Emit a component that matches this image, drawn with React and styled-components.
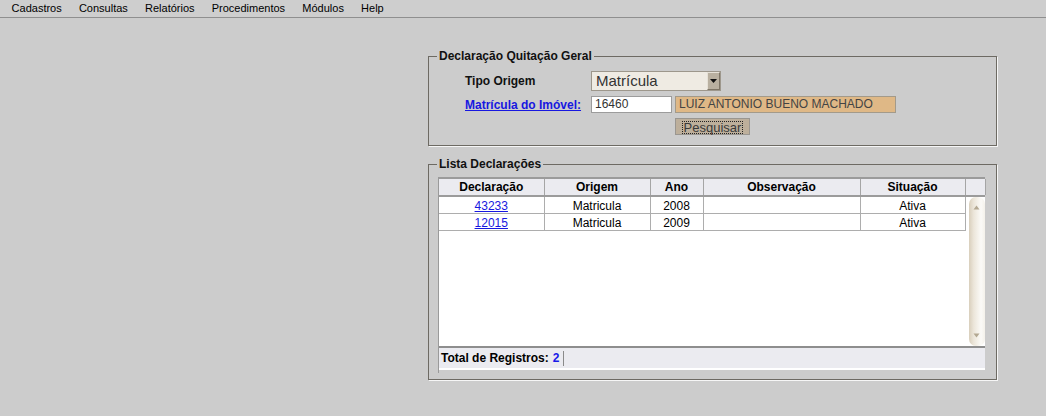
import React from "react";
import styled, { createGlobalStyle } from "styled-components";

const GlobalStyle = createGlobalStyle`
  html, body {
    margin: 0;
    padding: 0;
    background: #cccccc;
  }
  body {
    font-family: "Liberation Sans", Arial, sans-serif;
    color: #000;
  }
  #root {
    min-height: 416px;
  }
`;

const MenuBar = styled.div`
  display: flex;
  height: 17px;
  padding-left: 3px;
  border-bottom: 1px solid #8f8f8f;
  background: #cecece;
`;

const MenuItem = styled.div`
  padding: 0 8.6px;
  font-size: 11px;
  line-height: 17px;
`;

const Content = styled.div`
  display: flex;
  flex-direction: column;
  gap: 11px;
  width: 569px;
  margin: 31px 0 0 428px;
`;

const Group = styled.fieldset`
  margin: 0;
  padding: 0;
  min-width: 0;
  border: 1px solid #6d6a63;
  box-shadow: 1px 1px 0 #f6f6f6;
`;

const Legend = styled.legend`
  margin-left: 8px;
  padding: 0 2px;
  font-size: 12px;
  font-weight: bold;
  line-height: 14px;
  color: #111;
`;

const Form = styled.div`
  display: grid;
  grid-template-columns: 126px auto;
  row-gap: 5px;
  align-items: center;
  padding: 8px 0 10px 36px;
`;

const Label = styled.span`
  font-size: 12px;
  font-weight: bold;
  color: #111;
`;

const LinkLabel = styled.a`
  font-size: 12px;
  font-weight: bold;
  color: #1717e0;
  text-decoration: underline;
  cursor: pointer;
`;

const SelectBox = styled.div`
  display: flex;
  align-items: stretch;
  box-sizing: border-box;
  width: 130px;
  height: 20px;
  border: 1px solid #9d978c;
  background: #efebe3;
`;

const SelectText = styled.span`
  flex: 1;
  padding-left: 4px;
  font-size: 15px;
  line-height: 18px;
  color: #333;
`;

const SelectButton = styled.span`
  display: flex;
  align-items: center;
  justify-content: center;
  box-sizing: border-box;
  width: 13px;
  background: #b9b0a0;
  border-top: 1px solid #e6e1d7;
  border-left: 1px solid #e6e1d7;
  border-right: 1px solid #7e7566;
  border-bottom: 1px solid #7e7566;
`;

const InputRow = styled.div`
  display: flex;
  gap: 3px;
`;

const TextField = styled.div`
  box-sizing: border-box;
  width: ${p => p.$width}px;
  height: 17px;
  padding-left: 3px;
  border: 1px solid ${p => (p.$readonly ? "#a39a8a" : "#9c9c9c")};
  background: ${p => (p.$readonly ? "#dfb886" : "#ffffff")};
  font-size: 12px;
  line-height: 15px;
  color: ${p => (p.$readonly ? "#444" : "#333")};
  white-space: nowrap;
  overflow: hidden;
`;

const Button = styled.button`
  grid-column: 2;
  margin-left: 84px;
  box-sizing: border-box;
  width: 75px;
  height: 17px;
  padding: 1px 0 0;
  border: 1px solid #9a9690;
  background: #bdaf9b;
  font-family: "Liberation Sans", Arial, sans-serif;
  font-size: 13px;
  color: #3a3a3a;
  display: flex;
  justify-content: center;
  align-items: center;
`;

const ButtonFocus = styled.span`
  border: 1px dotted #222;
  padding: 0 1px;
  line-height: 11px;
`;

const ListArea = styled.div`
  padding: 6px 10px 6px 9px;
`;

const ListBox = styled.div`
  width: 546px;
  border-left: 1px solid #9a9a9a;
  padding-bottom: 3px;
`;

const Grid = styled.table`
  table-layout: fixed;
  border-collapse: collapse;
  width: ${p => p.$width}px;
`;

const HeaderWrap = styled.div`
  border-top: 2px solid #9b9b9b;
  border-bottom: 2px solid #9b9b9b;
  background: #ebebf0;
`;

const Th = styled.th`
  height: 16px;
  padding: 0;
  border-right: 1px solid #a5a5a5;
  font-size: 12px;
  font-weight: bold;
  text-align: center;
  line-height: 16px;
`;

const Body = styled.div`
  display: flex;
  height: 149px;
  background: #ffffff;
`;

const Td = styled.td`
  height: 15px;
  padding: 1px 0 0;
  border-right: 1px solid #adadad;
  border-bottom: 1px solid #adadad;
  font-size: 12px;
  text-align: center;
  line-height: 14px;
`;

const CellLink = styled.a`
  color: #1717e0;
  text-decoration: underline;
  cursor: pointer;
`;

const Scrollbar = styled.div`
  display: flex;
  flex-direction: column;
  justify-content: space-between;
  align-items: center;
  box-sizing: border-box;
  width: 17px;
  height: 149px;
  margin-left: 3px;
  padding: 8px 0;
  border-radius: 7px;
  background: linear-gradient(to right, #d9cfbc 0%, #ece6da 30%, #fbfaf7 75%, #f4f1ea 100%);
`;

const Footer = styled.div`
  display: flex;
  align-items: center;
  height: 20px;
  padding-left: 2px;
  border-top: 2px solid #8e8e8e;
  border-bottom: 2px solid #ffffff;
  background: #ebebf0;
  font-size: 12px;
  font-weight: bold;
`;

const Count = styled.span`
  margin-left: 4px;
  color: #1a1ae8;
`;

const Divider = styled.span`
  width: 1px;
  height: 15px;
  margin-left: 4px;
  background: #8a8a8a;
`;

const columns = [
  { title: "Declaração", width: 105 },
  { title: "Origem", width: 106 },
  { title: "Ano", width: 53 },
  { title: "Observação", width: 157 },
  { title: "Situação", width: 105 },
];

const rows = [
  { id: "43233", origem: "Matricula", ano: "2008", obs: "", situacao: "Ativa" },
  { id: "12015", origem: "Matricula", ano: "2009", obs: "", situacao: "Ativa" },
];

const menu = ["Cadastros", "Consultas", "Relatórios", "Procedimentos", "Módulos", "Help"];

function Triangle({ up }) {
  return (
    <svg width="7" height="5" viewBox="0 0 7 5">
      <path d={up ? "M3.5 0.5 L6.5 4.5 L0.5 4.5 Z" : "M0.5 0.5 L6.5 0.5 L3.5 4.5 Z"} fill="#b3a892" />
    </svg>
  );
}

export default function App() {
  return (
    <>
      <GlobalStyle />
      <MenuBar>
        {menu.map(m => (
          <MenuItem key={m}>{m}</MenuItem>
        ))}
      </MenuBar>
      <Content>
        <Group>
          <Legend>Declaração Quitação Geral</Legend>
          <Form>
            <Label>Tipo Origem</Label>
            <SelectBox>
              <SelectText>Matrícula</SelectText>
              <SelectButton>
                <svg width="7" height="4" viewBox="0 0 7 4">
                  <path d="M0 0 L7 0 L3.5 4 Z" fill="#111" />
                </svg>
              </SelectButton>
            </SelectBox>
            <LinkLabel>Matrícula do Imóvel:</LinkLabel>
            <InputRow>
              <TextField $width={81}>16460</TextField>
              <TextField $width={221} $readonly>
                LUIZ ANTONIO BUENO MACHADO
              </TextField>
            </InputRow>
            <Button>
              <ButtonFocus>Pesquisar</ButtonFocus>
            </Button>
          </Form>
        </Group>

        <Group>
          <Legend>Lista Declarações</Legend>
          <ListArea>
            <ListBox>
              <HeaderWrap>
                <Grid $width={546}>
                  <colgroup>
                    {columns.map(c => (
                      <col key={c.title} style={{ width: c.width }} />
                    ))}
                    <col style={{ width: 20 }} />
                  </colgroup>
                  <thead>
                    <tr>
                      {columns.map(c => (
                        <Th key={c.title}>{c.title}</Th>
                      ))}
                      <Th />
                    </tr>
                  </thead>
                </Grid>
              </HeaderWrap>
              <Body>
                <div>
                  <Grid $width={526}>
                    <colgroup>
                      {columns.map(c => (
                        <col key={c.title} style={{ width: c.width }} />
                      ))}
                    </colgroup>
                    <tbody>
                      {rows.map(r => (
                        <tr key={r.id}>
                          <Td>
                            <CellLink>{r.id}</CellLink>
                          </Td>
                          <Td>{r.origem}</Td>
                          <Td>{r.ano}</Td>
                          <Td>{r.obs}</Td>
                          <Td>{r.situacao}</Td>
                        </tr>
                      ))}
                    </tbody>
                  </Grid>
                </div>
                <Scrollbar>
                  <Triangle up />
                  <Triangle />
                </Scrollbar>
              </Body>
              <Footer>
                Total de Registros:
                <Count>2</Count>
                <Divider />
              </Footer>
            </ListBox>
          </ListArea>
        </Group>
      </Content>
    </>
  );
}
